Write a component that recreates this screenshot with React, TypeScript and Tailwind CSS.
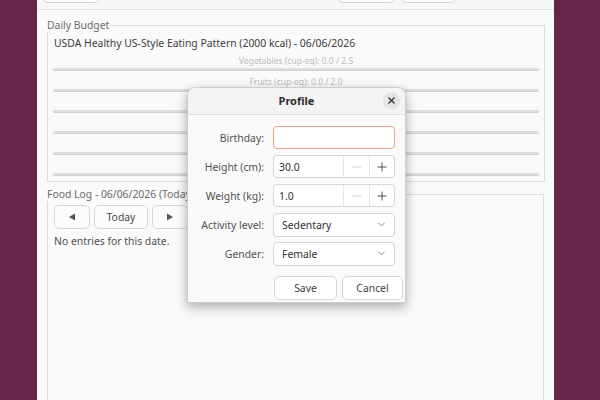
import React from "react";
import { ChevronDown } from "lucide-react";

const budgetRows: [string, string][] = [
  ["Vegetables (cup-eq)", "2.5"],
  ["Fruits (cup-eq)", "2.0"],
  ["Grains (oz-eq)", "6.0"],
  ["Protein Foods (oz-eq)", "5.5"],
  ["Dairy (cup-eq)", "3.0"],
  ["Oils (g)", "27.0"],
];

function Minus({ light }: { light?: boolean }) {
  return (
    <svg width="10" height="10" viewBox="0 0 10 10">
      <line x1="0.5" y1="5" x2="9.5" y2="5" stroke={light ? "#d2d2d2" : "#555"} strokeWidth="1" />
    </svg>
  );
}
function Plus() {
  return (
    <svg width="10" height="10" viewBox="0 0 10 10">
      <line x1="0.5" y1="5" x2="9.5" y2="5" stroke="#555" strokeWidth="1" />
      <line x1="5" y1="0.5" x2="5" y2="9.5" stroke="#555" strokeWidth="1" />
    </svg>
  );
}

function SpinRow({ label, value }: { label: string; value: string }) {
  return (
    <div className="flex items-center h-[23px]">
      <div className="w-[76px] text-right text-[#505050]">{label}</div>
      <div className="ml-[9px] w-[122px] h-[23px] flex rounded-[4px] border border-[#d6d6d6] bg-white">
        <div className="flex-1 flex items-center pl-[5px] text-[#303030]">{value}</div>
        <div className="w-[26px] border-l border-[#e6e6e6] flex items-center justify-center">
          <Minus light />
        </div>
        <div className="w-[25px] border-l border-[#e6e6e6] flex items-center justify-center">
          <Plus />
        </div>
      </div>
    </div>
  );
}

function ComboRow({ label, value }: { label: string; value: string }) {
  return (
    <div className="flex items-center h-[23px]">
      <div className="w-[76px] text-right text-[#505050]">{label}</div>
      <div className="ml-[9px] w-[122px] h-[24px] flex items-center justify-between rounded-[4px] border border-[#d6d6d6] bg-white pl-[8px] pr-[7px] text-[#303030]">
        <span>{value}</span>
        <ChevronDown size={11} strokeWidth={1.6} color="#555" />
      </div>
    </div>
  );
}

export default function App() {
  return (
    <div className="w-[600px] h-[400px] bg-[#65264a] flex overflow-hidden font-['Noto_Sans','Liberation_Sans',sans-serif] text-[10.4px] leading-[14px]">
      <div className="ml-[37px] w-[517px] h-full bg-[#fafafa] flex flex-col relative">
        {/* header bar */}
        <div className="h-[10px] shrink-0 border-b border-[#e2e2e2] bg-[#f7f7f7] flex items-end pb-[6px] overflow-hidden">
          <div className="ml-[6px] w-[57px] h-[24px] rounded-[5px] border border-[#d4d4d4] bg-white"></div>
          <div className="ml-auto w-[57px] h-[24px] rounded-[5px] border border-[#d4d4d4] bg-white"></div>
          <div className="ml-[6px] mr-[98px] w-[55px] h-[24px] rounded-[5px] border border-[#d4d4d4] bg-white"></div>
        </div>

        {/* Daily budget frame */}
        <div className="mt-[15px] ml-[10px] mr-[9px] relative border border-[#dcdcdc] h-[157px] pt-[9px] px-[5px]">
          <div className="absolute left-[-1px] top-[-8px] bg-[#fafafa] pr-[1px] text-[#6a6a6a] leading-[14px]">
            Daily Budget
          </div>
          <div className="text-[#3c3c3c] pl-[1px] leading-[16px]">
            USDA Healthy US-Style Eating Pattern (2000 kcal) - 06/06/2026
          </div>
          <div className="mt-[4px] flex flex-col gap-[5px]">
            {budgetRows.map(([name, goal]) => (
              <div key={name} className="flex flex-col">
                <div className="h-[12px] text-center text-[8.5px] leading-[12px] text-[#bababa]">
                  {name}: 0.0 / {goal}
                </div>
                <div className="mt-[1px] h-[3px] rounded-full bg-[#dedede] border-b border-[#d2d2d2]"></div>
              </div>
            ))}
          </div>
        </div>

        {/* Food log frame */}
        <div className="mt-[12px] ml-[10px] mr-[10px] relative border border-[#dcdcdc] flex-1 pt-[10px] px-[6px] mb-[-20px]">
          <div className="absolute left-[-1px] top-[-8px] bg-[#fafafa] pr-[1px] text-[#6a6a6a] leading-[14px]">
            Food Log - 06/06/2026 (Today)
          </div>
          <div className="flex gap-[4px]">
            <div className="w-[36px] h-[24px] rounded-[5px] border border-[#d6d6d6] bg-[#fcfcfc] flex items-center justify-center">
              <svg width="8" height="8" viewBox="0 0 8 8">
                <polygon points="7,0.5 7,7.5 1,4" fill="#555" />
              </svg>
            </div>
            <div className="w-[54px] h-[24px] rounded-[5px] border border-[#d6d6d6] bg-[#fcfcfc] flex items-center justify-center text-[#4a4a4a]">
              Today
            </div>
            <div className="w-[36px] h-[24px] rounded-[5px] border border-[#d6d6d6] bg-[#fcfcfc] flex items-center justify-center">
              <svg width="8" height="8" viewBox="0 0 8 8">
                <polygon points="1,0.5 1,7.5 7,4" fill="#555" />
              </svg>
            </div>
          </div>
          <div className="mt-[5px] text-[#505050] leading-[14px]">No entries for this date.</div>
        </div>

        {/* Profile dialog */}
        <div className="absolute left-[150px] top-[87px] w-[219px] h-[216px] rounded-t-[8px] border border-[#cdcdcd] bg-[#fafafa] shadow-[0_4px_12px_rgba(0,0,0,0.32)] flex flex-col">
          <div className="h-[27px] shrink-0 rounded-t-[8px] border-b border-[#e0e0e0] bg-[#f4f4f4] flex items-center justify-center relative">
            <span className="font-bold text-[#2e2e2e] text-[11px] leading-[14px]">Profile</span>
            <div className="absolute right-[5px] top-[4px] w-[17px] h-[17px] rounded-full bg-[#e4e4e4] flex items-center justify-center">
              <svg width="7" height="7" viewBox="0 0 7 7">
                <line x1="0.5" y1="0.5" x2="6.5" y2="6.5" stroke="#333" strokeWidth="1.2" />
                <line x1="6.5" y1="0.5" x2="0.5" y2="6.5" stroke="#333" strokeWidth="1.2" />
              </svg>
            </div>
          </div>
          <div className="pt-[11px] flex flex-col gap-[6px]">
            <div className="flex items-center h-[23px]">
              <div className="w-[76px] text-right text-[#505050]">Birthday:</div>
              <div className="ml-[9px] w-[122px] h-[23px] rounded-[4px] border border-[#e6a58b] bg-white"></div>
            </div>
            <SpinRow label="Height (cm):" value="30.0" />
            <SpinRow label="Weight (kg):" value="1.0" />
            <ComboRow label="Activity level:" value="Sedentary" />
            <ComboRow label="Gender:" value="Female" />
          </div>
          <div className="mt-[11px] flex justify-end gap-[5px] pr-[2px]">
            <div className="w-[63px] h-[24px] rounded-[5px] border border-[#d6d6d6] bg-white flex items-center justify-center text-[#404040]">
              Save
            </div>
            <div className="w-[61px] h-[24px] rounded-[5px] border border-[#d6d6d6] bg-white flex items-center justify-center text-[#404040]">
              Cancel
            </div>
          </div>
        </div>
      </div>
    </div>
  );
}
